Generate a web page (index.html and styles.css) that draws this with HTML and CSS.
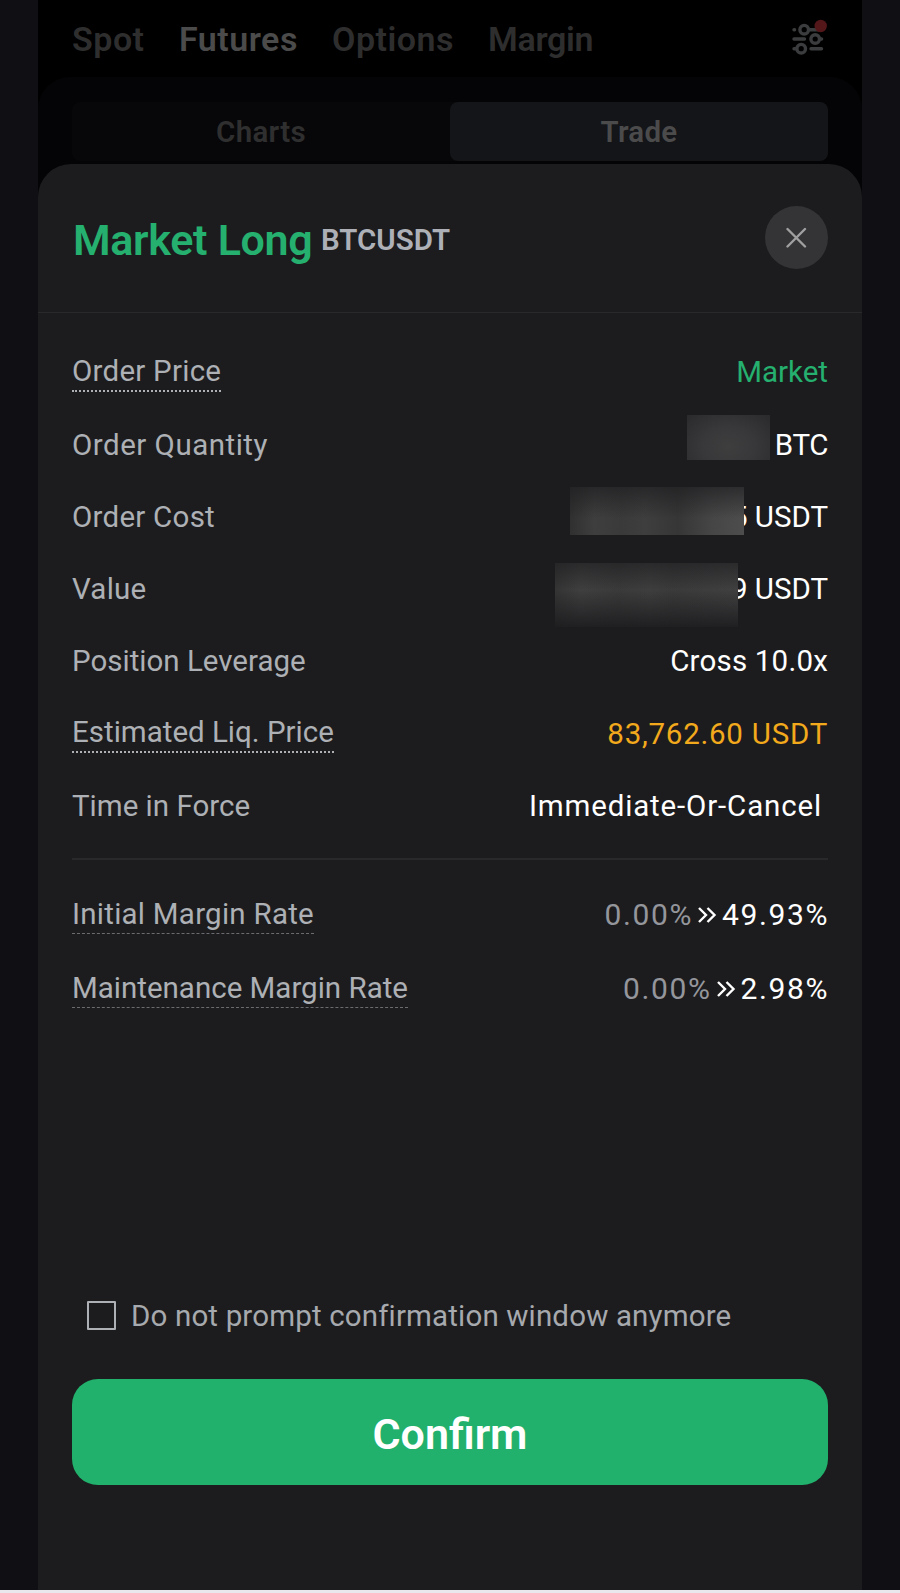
FILE: index.html
```html
<!DOCTYPE html>
<html lang="en">
<head>
    <meta charset="UTF-8">
    <meta name="viewport" content="width=device-width, initial-scale=1" />
    <title>Market Long BTCUSDT</title>
    <link rel="stylesheet" href="styles.css">
</head>
<body>

<div class="phone">
    <nav class="topnav">
        <span class="spot">Spot</span>
        <span class="futures active">Futures</span>
        <span class="options">Options</span>
        <span class="margin">Margin</span>
        <svg class="settings" width="38" height="38" viewBox="0 0 38 38" fill="none" stroke="#3b3c3d" stroke-width="3.400" stroke-linecap="round">
            <path d="M5 12.7h.6M21 12.7h9M5 22h10.5M32 22h.6M5 31.7h2M22 31.7h10.5" />
            <circle cx="15.2" cy="12.7" r="4.3" />
            <circle cx="26.2" cy="22" r="4.3" />
            <circle cx="12.2" cy="31.7" r="4.3" />
            <circle cx="31.7" cy="9" r="6.2" fill="#531719" stroke="none" />
        </svg>
    </nav>
    <div class="panel">
        <div class="tabs">
            <div class="tab">Charts</div>
            <div class="tab selected">Trade</div>
        </div>
    </div>

    <div class="sheet">
        <header class="sheet-head">
            <h1>Market Long</h1>
            <span class="symbol">BTCUSDT</span>
            <button class="close" aria-label="Close">
                <svg width="22" height="22" viewBox="0 0 22 22" fill="none" stroke="#a0a0a1" stroke-width="2.4" stroke-linecap="round">
                    <path d="M1.500 3l17.500 17.500M19 3L1.500 20.500" />
                </svg>
            </button>
        </header>

        <div class="list">
            <div class="row tall">
                <span class="label wide dotted">Order Price</span>
                <span class="value green">Market</span>
            </div>
            <div class="row">
                <span class="label wider">Order Quantity</span>
                <span class="value btc">BTC<i class="mask mask-qty"></i></span>
            </div>
            <div class="row">
                <span class="label wide">Order Cost</span>
                <span class="value usdt">5 USDT<i class="mask mask-cost"></i></span>
            </div>
            <div class="row">
                <span class="label wide">Value</span>
                <span class="value usdt">9 USDT<i class="mask mask-value"></i></span>
            </div>
            <div class="row">
                <span class="label">Position Leverage</span>
                <span class="value leverage">Cross 10.0x</span>
            </div>
            <div class="row liq">
                <span class="label dotted">Estimated Liq. Price</span>
                <span class="value orange">83,762.60 USDT</span>
            </div>
            <div class="row">
                <span class="label">Time in Force</span>
                <span class="value tif">Immediate-Or-Cancel</span>
            </div>
        </div>

        <div class="list rates">
            <div class="row tall">
                <span class="label wide dashed">Initial Margin Rate</span>
                <span class="value rate">
                    <span class="from">0.00%</span>
                    <svg class="arrow" width="20" height="18" viewBox="0 0 20 18" fill="none" stroke="#fff" stroke-width="2.4">
                        <path d="M2 2l7 7-7 7M10.500 2l7 7-7 7" />
                    </svg>
                    <span>49.93%</span>
                </span>
            </div>
            <div class="row tall">
                <span class="label dashed">Maintenance Margin Rate</span>
                <span class="value rate">
                    <span class="from">0.00%</span>
                    <svg class="arrow" width="20" height="18" viewBox="0 0 20 18" fill="none" stroke="#fff" stroke-width="2.4">
                        <path d="M2 2l7 7-7 7M10.500 2l7 7-7 7" />
                    </svg>
                    <span>2.98%</span>
                </span>
            </div>
        </div>

        <footer class="sheet-foot">
            <label class="prompt"><span class="box"></span>Do not prompt confirmation window anymore</label>
            <button class="confirm">Confirm</button>
        </footer>
    </div>
</div>

</body>
</html>
```
FILE: styles.css
```css
* {
    box-sizing: border-box;
}

body {
    margin: 0;
    height: 1593px;
    overflow: hidden;
    background: #101014;
    border-bottom: 3px solid #e9e9ed;
    font-family: Roboto, "Liberation Sans", sans-serif;
    font-size: 29.5px;
    color: #fff;
}

button {
    border: 0;
    padding: 0;
    font-family: inherit;
}

.phone {
    width: 824px;
    height: 1590px;
    margin: 0 auto;
    background: #000;
    display: flex;
    flex-direction: column;
}

.topnav {
    height: 77px;
    padding: 2px 34px 0 34px;
    display: flex;
    align-items: center;
    font-size: 34px;
    font-weight: 600;
    letter-spacing: .5px;
    color: #2e2e2e;
}

.topnav span {
    flex: none;
    position: relative;
    top: -1px;
    white-space: nowrap;
}

.topnav .active {
    color: #4b4b4b;
}

.spot {
    width: 107px;
}

.futures {
    width: 153px;
}

.options {
    width: 156px;
}

.margin {
    letter-spacing: -.3px;
}

.settings {
    margin: -7px 1px 0 auto;
}

/* the sheet slides over the lower part of this panel */
.panel {
    height: 130px;
    flex: none;
    padding: 25px 34px;
    border-radius: 32px 32px 0 0;
    background: #040406;
}

.tabs {
    height: 59px;
    display: flex;
    border-radius: 8px;
    background: #070709;
}

.tab {
    flex: 1;
    border-radius: 8px;
    line-height: 60px;
    text-align: center;
    font-weight: 600;
    letter-spacing: .3px;
    color: #2f2f30;
}

.tab.selected {
    background: #141518;
    color: #4b4b4c;
}

.sheet {
    position: relative;
    flex: 1;
    margin-top: -43px;
    border-radius: 33px 33px 0 0;
    background: #1c1c1e;
    display: flex;
    flex-direction: column;
}

.sheet-head {
    height: 149px;
    padding: 0 34px 0 35px;
    display: flex;
    align-items: baseline;
    border-bottom: 1px solid #29292b;
}

.sheet-head h1 {
    margin: 0;
    width: 248px;
    line-height: 152px;
    font-size: 43px;
    font-weight: 600;
    letter-spacing: -.3px;
    white-space: nowrap;
    color: #25b06f;
}

.symbol {
    margin-top: 3px;
    align-self: center;
    font-weight: 600;
    color: #aeb0b8;
}

.close {
    width: 63px;
    height: 63px;
    margin: -2px 0 0 auto;
    align-self: center;
    border-radius: 50%;
    background: #343436;
    display: flex;
    align-items: center;
    justify-content: center;
}

.list {
    margin: 0 34px;
    padding: 22px 0 16px;
}

.rates {
    padding: 18px 0 0;
    border-top: 2px solid #29292b;
}

.row {
    height: 72px;
    line-height: 36px;
    display: flex;
    align-items: center;
    justify-content: space-between;
}

.row.tall {
    height: 74px;
}

.row.liq {
    height: 73px;
}

.label {
    color: #adb0b4;
}

.wide {
    letter-spacing: .25px;
}

.wider {
    letter-spacing: .5px;
}

.dotted {
    padding-bottom: 1px;
    border-bottom: 2px dotted #adb0b4;
}

.dashed {
    padding-bottom: 1px;
    border-bottom: 1px dashed #6b6c6f;
}

.value {
    position: relative;
}

.green {
    color: #25b06f;
}

.orange {
    letter-spacing: .75px;
    color: #f2a91c;
}

.leverage {
    letter-spacing: .2px;
}

.btc {
    letter-spacing: -.4px;
}

.tif {
    padding-right: 6px;
    letter-spacing: .85px;
}

.mask {
    position: absolute;
}

.mask-qty {
    top: -12px;
    right: 58px;
    width: 83px;
    height: 45px;
    background: radial-gradient(ellipse at 50% 70%, #3e3e3f, #38383a 45%, #2a2a2c 100%);
}

.mask-cost {
    top: -12px;
    right: 84px;
    width: 174px;
    height: 48px;
    background:
        linear-gradient(rgba(28, 28, 30, .65), rgba(28, 28, 30, 0) 65%),
        linear-gradient(90deg, #303031, #3e3e3f 14%, #3a3a3b 30%, #3e3e3f 43%, #363637 62%, #464647 82%, #4d4d4e);
}

.mask-value {
    top: -8px;
    right: 90px;
    width: 183px;
    height: 64px;
    background:
        linear-gradient(rgba(28, 28, 30, .6), rgba(28, 28, 30, 0) 42%, rgba(28, 28, 30, .9)),
        linear-gradient(90deg, #343435, #3f3f40 14%, #3a3a3b 35%, #3e3e3f 52%, #3a3a3b 65%, #404041);
}

.rate {
    display: flex;
    align-items: center;
    font-size: 30px;
    letter-spacing: 1.6px;
    margin-right: -1px;
}

.from {
    color: #94969c;
}

.arrow {
    margin: 0 5px 0 4px;
}

.sheet-foot {
    margin: auto 34px 105px;
}

.prompt {
    height: 36px;
    margin-bottom: 46px;
    padding: 1px 0 0 15px;
    display: flex;
    align-items: center;
    white-space: nowrap;
    letter-spacing: .15px;
    color: #a6a9ad;
}

.box {
    width: 29px;
    height: 29px;
    margin: -1px 15px 0 0;
    border: 2px solid #adb0b4;
    border-radius: 1px;
}

.confirm {
    width: 100%;
    height: 106px;
    padding-top: 4px;
    display: block;
    border-radius: 26px;
    background: #21b16c;
    font-size: 43px;
    font-weight: 600;
    color: #fff;
}
```
